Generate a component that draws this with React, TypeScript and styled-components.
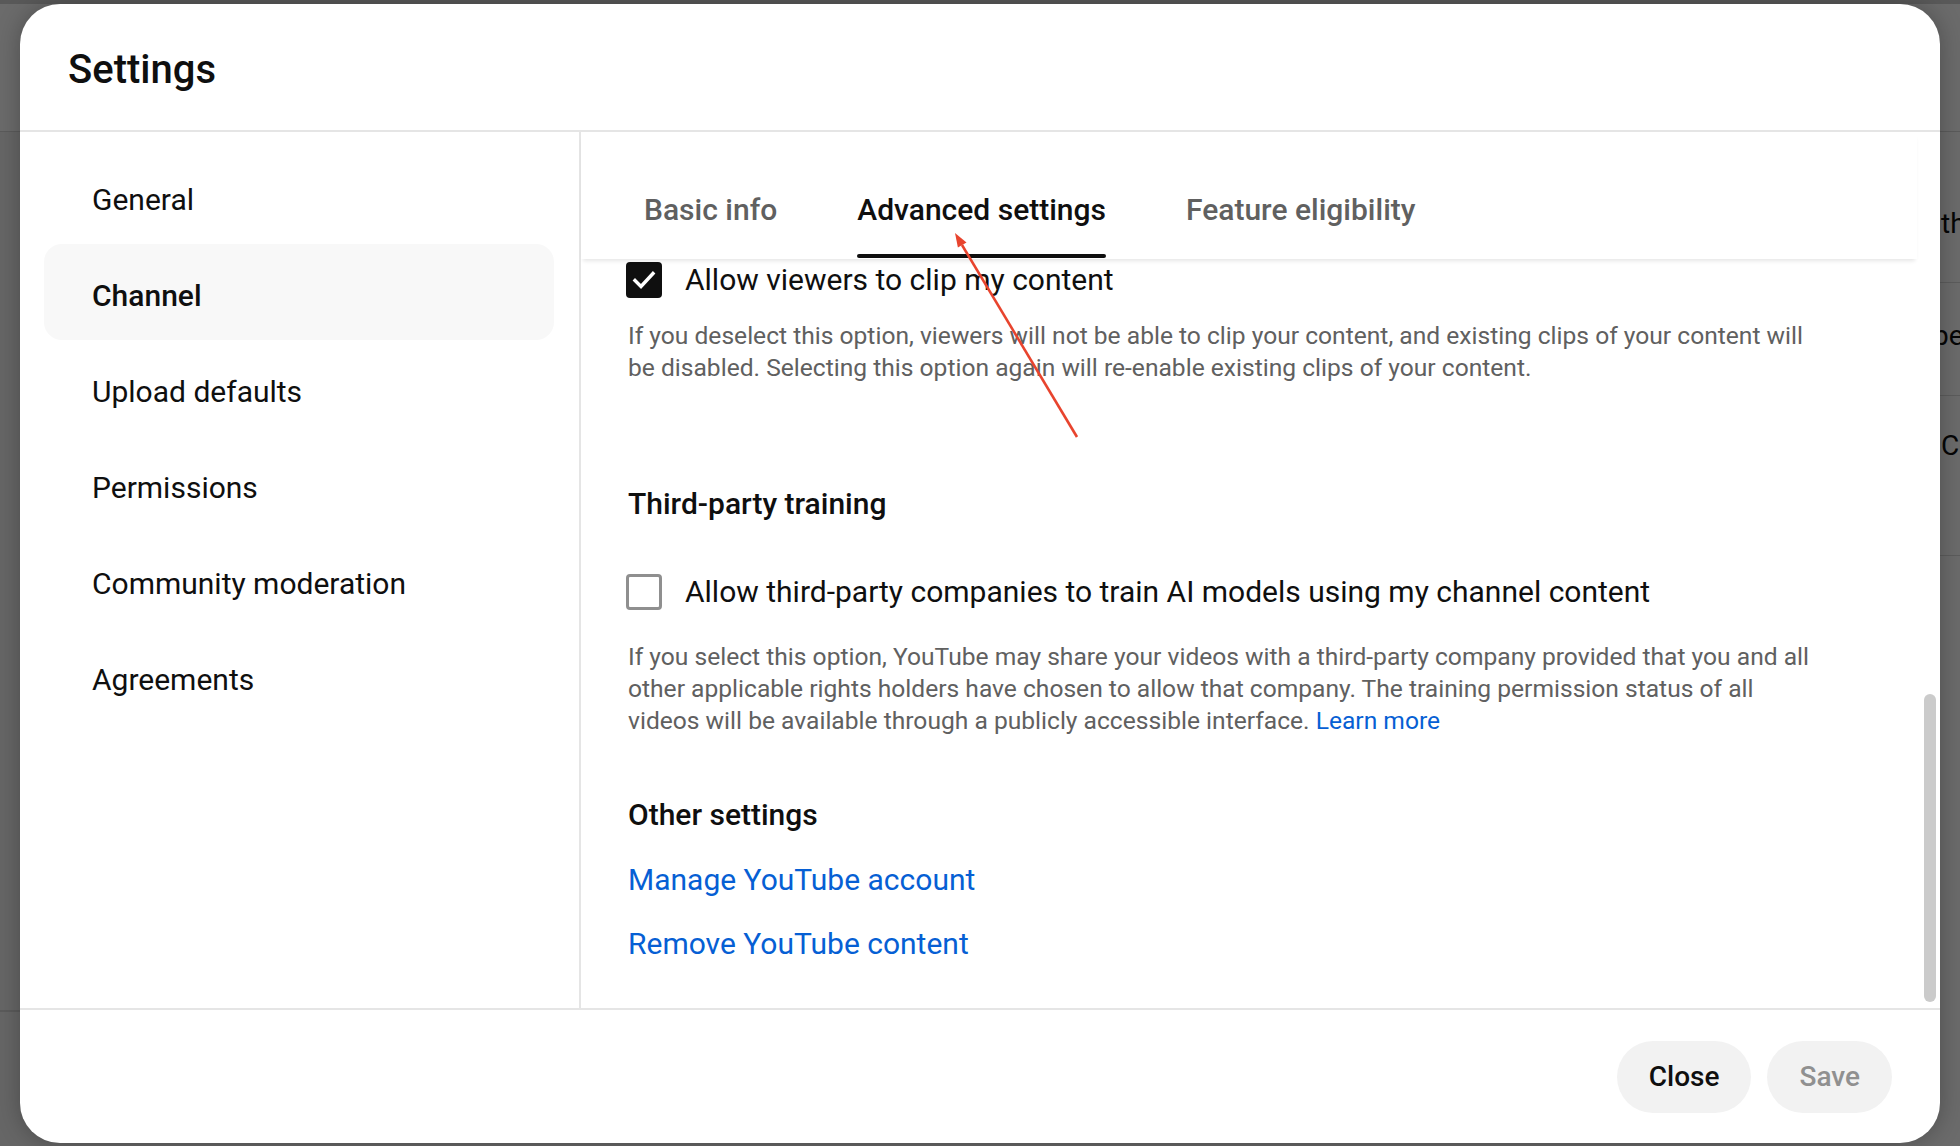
import React from 'react';
import styled, { createGlobalStyle } from 'styled-components';

const GlobalStyle = createGlobalStyle`
  html, body { margin: 0; padding: 0; }
  body {
    font-family: Roboto, "Liberation Sans", Arial, sans-serif;
    background: #f2f2f2;
    overflow: hidden;
  }
  * { box-sizing: border-box; }
`;

const Stage = styled.div`
  position: relative;
  width: 1960px;
  height: 1146px;
  overflow: hidden;
`;

/* ---------- page behind the dialog ---------- */
const BackdropPage = styled.div`
  display: flex;
  flex-direction: column;
  width: 100%;
  height: 100%;
  background: #f2f2f2;
`;

const BackdropTop = styled.div`
  flex: none;
  height: 132px;
  background: #ffffff;
  border-top: 4px solid #d4d4d4;
  border-bottom: 1px solid #d8d8d8;
`;

const BackdropBody = styled.div`
  flex: 1;
  display: flex;
  justify-content: space-between;
`;

const BackdropLeft = styled.div`
  width: 20px;
  height: 880px;
  border-bottom: 2px solid #d8d8d8;
`;

const BackdropTable = styled.div`
  width: 60px;
  display: flex;
  flex-direction: column;
  overflow: hidden;
  background: #ffffff;
`;

const BackdropRow = styled.div<{ $h: number; $pt: number; $pl: number }>`
  height: ${(p) => p.$h}px;
  padding: ${(p) => p.$pt}px 0 0 ${(p) => p.$pl}px;
  border-bottom: 1px solid #dcdcdc;
  font-size: 28px;
  line-height: 36px;
  color: #0f0f0f;
  white-space: nowrap;
`;

const Overlay = styled.div`
  position: absolute;
  inset: 0;
  background: rgba(0, 0, 0, 0.58);
`;

/* ---------- dialog ---------- */
const Dialog = styled.div`
  position: absolute;
  z-index: 1;
  left: 20px;
  top: 4px;
  width: 1920px;
  height: 1139px;
  background: #ffffff;
  border-radius: 40px;
  overflow: hidden;
  display: flex;
  flex-direction: column;
  box-shadow: 0 0 24px rgba(0, 0, 0, 0.28);
`;

const Header = styled.div`
  flex: none;
  height: 128px;
  padding: 42px 0 0 48px;
  border-bottom: 2px solid #e5e5e5;
`;

const Title = styled.h1`
  margin: 0;
  font-size: 40px;
  line-height: 48px;
  font-weight: 500;
  color: #0f0f0f;
`;

const Body = styled.div`
  flex: 1;
  display: flex;
  min-height: 0;
`;

const Sidebar = styled.nav`
  flex: none;
  width: 561px;
  padding: 16px 25px 0 24px;
  border-right: 2px solid #e5e5e5;
  display: flex;
  flex-direction: column;
`;

const NavItem = styled.div<{ $active?: boolean }>`
  height: 96px;
  display: flex;
  align-items: center;
  padding: 7px 0 0 48px;
  border-radius: 18px;
  font-size: 30px;
  color: #0f0f0f;
  font-weight: ${(p) => (p.$active ? 500 : 400)};
  background: ${(p) => (p.$active ? '#f8f8f8' : 'transparent')};
`;

const Main = styled.div`
  flex: 1;
  display: flex;
  min-width: 0;
`;

const MainColumn = styled.div`
  flex: 1;
  display: flex;
  flex-direction: column;
  min-width: 0;
`;

const TabBar = styled.div`
  flex: none;
  position: relative;
  z-index: 1;
  height: 127px;
  padding: 58px 0 0 63px;
  display: flex;
  gap: 80px;
  align-items: flex-start;
  background: #ffffff;
  box-shadow: 0 4px 4px -2px rgba(0, 0, 0, 0.1);
`;

const Tab = styled.div<{ $active?: boolean }>`
  font-size: 30px;
  line-height: 40px;
  font-weight: 500;
  color: ${(p) => (p.$active ? '#0f0f0f' : '#606060')};
  &::after {
    content: '';
    display: block;
    margin-top: 24px;
    height: 4px;
    border-radius: 2px;
    background: ${(p) => (p.$active ? '#0f0f0f' : 'transparent')};
  }
`;

const Content = styled.div`
  flex: 1;
  padding: 3px 0 0 47px;
  display: flex;
  flex-direction: column;
  align-items: flex-start;
`;

const CheckRow = styled.label<{ $mt?: number }>`
  display: flex;
  align-items: center;
  gap: 23px;
  height: 36px;
  margin: ${(p) => p.$mt ?? 0}px 0 0 -2px;
`;

const Box = styled.span<{ $checked?: boolean }>`
  flex: none;
  width: 36px;
  height: 36px;
  border-radius: 4px;
  display: flex;
  align-items: center;
  justify-content: center;
  background: ${(p) => (p.$checked ? '#0f0f0f' : '#ffffff')};
  border: ${(p) => (p.$checked ? 'none' : '3px solid #8f8f8f')};
`;

const CheckLabel = styled.span`
  font-size: 30px;
  line-height: 36px;
  color: #0f0f0f;
`;

const Description = styled.p<{ $mt: number }>`
  margin: ${(p) => p.$mt}px 0 0 0;
  width: 1200px;
  font-size: 24.6px;
  line-height: 32px;
  color: #606060;
`;

const SectionTitle = styled.h2<{ $mt: number }>`
  margin: ${(p) => p.$mt}px 0 0 0;
  font-size: 30px;
  line-height: 36px;
  font-weight: 500;
  color: #0f0f0f;
`;

const Link = styled.a<{ $mt?: number }>`
  display: inline-block;
  margin-top: ${(p) => p.$mt ?? 0}px;
  color: #065fd4;
  text-decoration: none;
  font-size: 30px;
  line-height: 36px;
`;

const InlineLink = styled.a`
  color: #065fd4;
  text-decoration: none;
`;

const ScrollTrack = styled.div`
  flex: none;
  width: 23px;
  padding: 562px 0 0 7px;
`;

const Thumb = styled.div`
  width: 12px;
  height: 308px;
  border-radius: 6px;
  background: #cbcbcb;
`;

const Footer = styled.div`
  flex: none;
  height: 135px;
  border-top: 2px solid #e5e5e5;
  display: flex;
  justify-content: flex-end;
  align-items: center;
  gap: 16px;
  padding-right: 48px;
`;

const Button = styled.button<{ $disabled?: boolean }>`
  height: 72px;
  padding: 0 32px;
  border: none;
  border-radius: 36px;
  background: #f2f2f2;
  font-family: Roboto, "Liberation Sans", Arial, sans-serif;
  font-size: 28px;
  font-weight: 500;
  color: ${(p) => (p.$disabled ? '#909090' : '#0f0f0f')};
`;

const Annotation = styled.svg`
  position: absolute;
  z-index: 5;
  left: 0;
  top: 0;
  width: 1960px;
  height: 1146px;
  pointer-events: none;
`;

const navItems = [
  'General',
  'Channel',
  'Upload defaults',
  'Permissions',
  'Community moderation',
  'Agreements',
];

const tabs = ['Basic info', 'Advanced settings', 'Feature eligibility'];

export default function App() {
  return (
    <Stage>
      <GlobalStyle />
      <BackdropPage>
        <BackdropTop />
        <BackdropBody>
          <BackdropLeft />
          <BackdropTable>
            <BackdropRow $h={151} $pt={74} $pl={41}>the</BackdropRow>
            <BackdropRow $h={113} $pt={35} $pl={33}>pe</BackdropRow>
            <BackdropRow $h={160} $pt={32} $pl={41}>Co</BackdropRow>
          </BackdropTable>
        </BackdropBody>
      </BackdropPage>
      <Overlay />

      <Dialog>
        <Header>
          <Title>Settings</Title>
        </Header>
        <Body>
          <Sidebar>
            {navItems.map((n) => (
              <NavItem key={n} $active={n === 'Channel'}>
                {n}
              </NavItem>
            ))}
          </Sidebar>
          <Main>
            <MainColumn>
              <TabBar>
                {tabs.map((t) => (
                  <Tab key={t} $active={t === 'Advanced settings'}>
                    {t}
                  </Tab>
                ))}
              </TabBar>
              <Content>
                <CheckRow>
                  <Box $checked>
                    <svg width="28" height="28" viewBox="0 0 28 28">
                      <polyline
                        points="5,14.5 11,20.5 23,7.5"
                        fill="none"
                        stroke="#ffffff"
                        strokeWidth="3.4"
                        strokeLinecap="square"
                      />
                    </svg>
                  </Box>
                  <CheckLabel>Allow viewers to clip my content</CheckLabel>
                </CheckRow>
                <Description $mt={21.5}>
                  If you deselect this option, viewers will not be able to clip your content, and existing clips of
                  your content will be disabled. Selecting this option again will re-enable existing clips of your
                  content.
                </Description>

                <SectionTitle $mt={102}>Third-party training</SectionTitle>
                <CheckRow $mt={52.5}>
                  <Box />
                  <CheckLabel>Allow third-party companies to train AI models using my channel content</CheckLabel>
                </CheckRow>
                <Description $mt={31}>
                  If you select this option, YouTube may share your videos with a third-party company provided that
                  you and all other applicable rights holders have chosen to allow that company. The training
                  permission status of all videos will be available through a publicly accessible interface.{' '}
                  <InlineLink href="#">Learn more</InlineLink>
                </Description>

                <SectionTitle $mt={59.5}>Other settings</SectionTitle>
                <Link href="#" $mt={29}>
                  Manage YouTube account
                </Link>
                <Link href="#" $mt={28}>
                  Remove YouTube content
                </Link>
              </Content>
            </MainColumn>
            <ScrollTrack>
              <Thumb />
            </ScrollTrack>
          </Main>
        </Body>
        <Footer>
          <Button>Close</Button>
          <Button $disabled>Save</Button>
        </Footer>
      </Dialog>

      <Annotation viewBox="0 0 1960 1146">
        <line x1="1077" y1="437" x2="962" y2="245" stroke="#e8442e" strokeWidth="2.6" />
        <polygon points="955,233 966.5,242.4 957.9,247.6" fill="#e8442e" />
      </Annotation>
    </Stage>
  );
}
